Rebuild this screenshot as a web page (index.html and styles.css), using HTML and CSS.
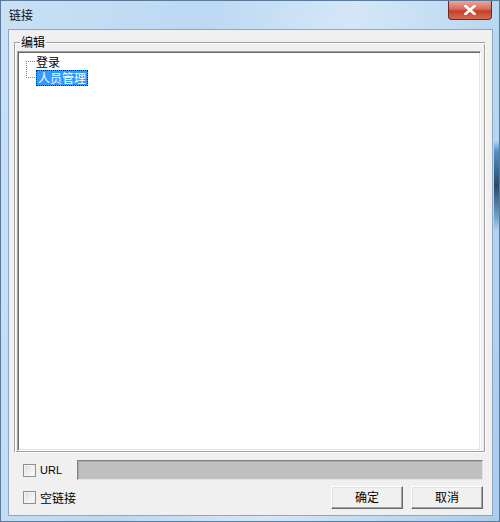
FILE: index.html
```html
<!DOCTYPE html>
<html lang="zh-CN">
<head>
    <meta charset="UTF-8">
    <title>链接</title>
    <link rel="stylesheet" href="styles.css">
</head>
<body>
<div class="window">
    <div class="titlebar">
        <span class="title">链接</span>
        <span class="close">
            <svg width="12" height="10" viewBox="0 0 12 10">
                <path d="M1.5 1 L10.5 9 M10.5 1 L1.5 9" stroke="#fff" stroke-width="2.6" stroke-linecap="square"/>
            </svg>
        </span>
    </div>
    <div class="client">
        <div class="group">
            <span class="legend">编辑</span>
            <div class="tree">
                <div class="lines"></div>
                <div class="item">登录</div>
                <div class="item"><span class="sel">人员管理</span></div>
            </div>
        </div>
        <div class="row row1">
            <label class="check"><span class="box"></span><span class="txt url">URL</span></label>
            <div class="input"></div>
        </div>
        <div class="row row2">
            <label class="check"><span class="box"></span><span class="txt">空链接</span></label>
            <div class="btns">
                <div class="btn">确定</div>
                <div class="btn">取消</div>
            </div>
        </div>
    </div>
</div>
</body>
</html>
```

FILE: styles.css
```css
*{
    margin: 0;
    padding: 0;
    box-sizing: border-box;
}
body{
    width: 500px;
    height: 522px;
    overflow: hidden;
    font-family: "Noto Sans CJK SC", "Liberation Sans", sans-serif;
    font-size: 12px;
    color: #000;
}
.window{
    width: 500px;
    height: 522px;
    display: flex;
    flex-direction: column;
    padding: 0 6px 5px 7px;
    background:
        linear-gradient(to bottom, transparent 140px, #4f93c8 150px, #2c4a66 185px, #6f9fc8 215px, transparent 230px) right / 5px 100% no-repeat,
        linear-gradient(100deg, #c9e0f5 0%, #bcd8f3 35%, #d4e7f8 60%, #a9cdee 100%);
    border: 1px solid #5a7a9c;
}
.titlebar{
    height: 28px;
    flex-shrink: 0;
    display: flex;
    justify-content: space-between;
    align-items: flex-start;
}
.title{
    margin-top: 5px;
    margin-left: 1px;
    font-size: 12px;
    color: #111;
}
.close{
    width: 44px;
    height: 19px;
    margin-right: 1px;
    display: flex;
    align-items: center;
    justify-content: center;
    background: linear-gradient(#e9a89b 0%, #d76b5a 45%, #c2402c 55%, #d86a4f 100%);
    border: 1px solid #6d2a22;
    border-top: none;
    border-radius: 0 0 4px 4px;
}
.client{
    flex: 1;
    background: #f0f0f0;
    border: 1px solid #8da6c2;
    display: flex;
    flex-direction: column;
    padding: 0 6px 6px 5px;
}
.group{
    margin-top: 12px;
    height: 411px;
    border: 1px solid;
    border-color: #a0a0a0 #fff #fff #a0a0a0;
    box-shadow: 1px 1px 0 #fff inset, -1px -1px 0 #a0a0a0 inset;
    padding: 8px 4px 1px 2px;
    display: flex;
    flex-direction: column;
    position: relative;
}
.legend{
    position: absolute;
    left: 5px;
    top: -8px;
    padding: 0 1px;
    background: #f0f0f0;
    font-size: 12px;
    line-height: 14px;
}
.tree{
    flex: 1;
    background: #fff;
    border-top: 1px solid #a0a0a0;
    border-left: 1px solid #a0a0a0;
    border-right: 1px solid #fff;
    border-bottom: 1px solid #fff;
    box-shadow: 1px 1px 0 #696969 inset, -1px -1px 0 #e3e3e3 inset;
    padding: 2px 0 0 18px;
    position: relative;
}
.lines{
    position: absolute;
    left: 8px;
    top: 9px;
    width: 9px;
    height: 17px;
    border-left: 1px dotted #808080;
    border-top: 1px dotted #808080;
    border-bottom: 1px dotted #808080;
}
.item{
    height: 16px;
    line-height: 16px;
    font-size: 12px;
}
.sel{
    display: inline-block;
    height: 16px;
    line-height: 14px;
    padding: 0 1px;
    background: #3399ff;
    color: #fff;
    border: 1px dotted #0d2a52;
}
.row{
    display: flex;
    align-items: center;
    padding: 0 3px 0 9px;
    flex-shrink: 0;
}
.row1{
    margin-top: 7px;
    height: 20px;
}
.row2{
    margin-top: 6px;
    height: 23px;
}
.check{
    display: flex;
    align-items: center;
    white-space: nowrap;
}
.row1 .check{
    width: 54px;
}
.box{
    width: 13px;
    height: 13px;
    border: 1px solid #8f8f8f;
    background: linear-gradient(135deg, #dcdcdc, #fff);
    box-shadow: 0 0 0 1px #f4f4f4 inset;
}
.txt{
    margin-left: 4px;
    font-size: 12px;
}
.url{
    font-family: "Liberation Sans", sans-serif;
    font-size: 11px;
}
.input{
    flex: 1;
    height: 20px;
    background: #bfbfbf;
    border-top: 1px solid #828282;
    border-left: 1px solid #828282;
    border-right: 1px solid #e3e3e3;
    border-bottom: 1px solid #e3e3e3;
    box-shadow: 1px 1px 0 #a8a8a8 inset;
}
.btns{
    margin-left: auto;
    display: flex;
    gap: 8px;
}
.btn{
    width: 72px;
    height: 23px;
    line-height: 20px;
    text-align: center;
    font-size: 12px;
    background: #f0f0f0;
    border-top: 1px solid #fff;
    border-left: 1px solid #fff;
    border-right: 1px solid #696969;
    border-bottom: 1px solid #696969;
    box-shadow: -1px -1px 0 #a0a0a0 inset, 1px 1px 0 #e3e3e3 inset;
}
```
